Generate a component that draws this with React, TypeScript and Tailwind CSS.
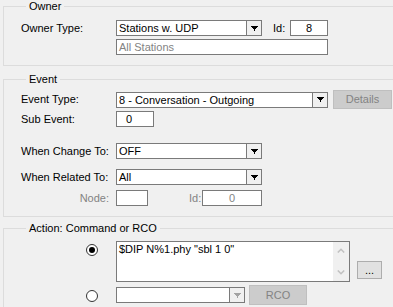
import type { ReactNode } from "react";

function Arrow({ disabled }: { disabled?: boolean }) {
  const fill = disabled ? "#a3a3a3" : "#000";
  return (
    <svg width="7" height="5" viewBox="0 0 7 5" shapeRendering="crispEdges">
      <rect x="0" y="0" width="7" height="1" fill={fill} />
      <rect x="1" y="1" width="5" height="1" fill={fill} />
      <rect x="2" y="2" width="3" height="1" fill={fill} />
      <rect x="3" y="3" width="1" height="2" fill={fill} />
    </svg>
  );
}

function Combo({ value, width, disabled }: { value?: string; width: string; disabled?: boolean }) {
  return (
    <div className={`flex h-[16px] ${width} border border-[#7a7a7a] bg-white`}>
      <span className="flex-1 truncate pl-[2px] leading-[14px]">{value}</span>
      <span className="flex w-[15px] items-center justify-center border-l border-[#7a7a7a] bg-[#f0f0f0]">
        <Arrow disabled={disabled} />
      </span>
    </div>
  );
}

function Box({ children, width, className = "" }: { children?: ReactNode; width: string; className?: string }) {
  return (
    <div className={`h-[16px] ${width} border border-[#7a7a7a] bg-white leading-[14px] ${className}`}>
      {children}
    </div>
  );
}

function Group({ title, className = "", children }: { title: string; className?: string; children: ReactNode }) {
  return (
    <fieldset className={`w-[400px] border border-[#dcdcdc] pl-[17px] ${className}`}>
      <legend className="ml-[5px] px-[3px] leading-[13px]">{title}</legend>
      {children}
    </fieldset>
  );
}

function Radio({ checked }: { checked?: boolean }) {
  return (
    <span className="flex h-[12px] w-[12px] items-center justify-center rounded-full border border-[#333] bg-white">
      {checked && <span className="h-[6px] w-[6px] rounded-full bg-black" />}
    </span>
  );
}

function Chevron({ up }: { up?: boolean }) {
  return (
    <svg width="8" height="5" viewBox="0 0 8 5">
      <path d={up ? "M0.8 4.5 L4 1.3 L7.2 4.5" : "M0.8 0.5 L4 3.7 L7.2 0.5"} fill="none" stroke="#c2c2c2" strokeWidth="1.6" />
    </svg>
  );
}

export default function App() {
  return (
    <div className="h-[307px] w-[393px] overflow-hidden bg-[#f0f0f0] pl-[3px] font-[family-name:Liberation_Sans,Arial,sans-serif] text-[11px] leading-[13px] text-black">
      <Group title="Owner" className="pt-[7px] pb-[10px]">
        <div className="flex h-[16px] items-center">
          <span className="w-[95px]">Owner Type:</span>
          <Combo value="Stations w. UDP" width="w-[146px]" />
          <span className="ml-[11px] w-[17px]">Id:</span>
          <Box width="w-[38px]" className="text-center">8</Box>
        </div>
        <div className="mt-[3px] flex">
          <span className="w-[95px]" />
          <Box width="w-[212px]" className="pl-[2px] text-[#838383]">All Stations</Box>
        </div>
      </Group>

      <Group title="Event" className="mt-[7px] pt-[4px] pb-[10px]">
        <div className="flex h-[19px] items-center">
          <span className="w-[95px]">Event Type:</span>
          <Combo value="8 - Conversation - Outgoing" width="w-[212px]" />
          <button className="ml-[5px] h-[19px] w-[59px] border border-[#bfbfbf] bg-[#cccccc] text-[#838383]">
            Details
          </button>
        </div>
        <div className="mt-[2px] flex items-center">
          <span className="w-[95px]">Sub Event:</span>
          <Box width="w-[38px]" className="pl-[9px]">0</Box>
        </div>
        <div className="mt-[16px] flex items-center">
          <span className="w-[95px]">When Change To:</span>
          <Combo value="OFF" width="w-[146px]" />
        </div>
        <div className="mt-[10px] flex items-center">
          <span className="w-[95px]">When Related To:</span>
          <Combo value="All" width="w-[146px]" />
        </div>
        <div className="mt-[5px] flex items-center text-[#838383]">
          <span className="w-[95px] pr-[7px] text-right">Node:</span>
          <Box width="w-[32px]" />
          <span className="ml-[41px] w-[13px]">Id:</span>
          <Box width="w-[60px]" className="text-center">0</Box>
        </div>
      </Group>

      <Group title="Action: Command or RCO" className="mt-[5px] pt-[6px] pb-[10px]">
        <div className="flex">
          <span className="flex w-[95px] justify-end pt-[3px] pr-[18px]">
            <Radio checked />
          </span>
          <div className="flex h-[41px] w-[234px] border border-[#7a7a7a] bg-white">
            <span className="flex-1 pt-[1px] pl-[2px]">{'$DIP N%1.phy "sbl 1 0"'}</span>
            <span className="flex w-[16px] flex-col justify-between bg-[#f0f0f0]">
              <span className="flex h-[17px] items-center justify-center">
                <Chevron up />
              </span>
              <span className="flex h-[17px] items-center justify-center">
                <Chevron />
              </span>
            </span>
          </div>
          <button className="mb-[3px] ml-[7px] h-[18px] w-[25px] self-end border border-[#adadad] bg-[#e1e1e1] leading-[12px]">
            ...
          </button>
        </div>
        <div className="mt-[3px] flex h-[20px] items-center">
          <span className="flex w-[95px] justify-end pr-[18px]">
            <span className="mt-[2px]">
              <Radio />
            </span>
          </span>
          <Combo width="w-[129px]" disabled />
          <button className="ml-[4px] h-[20px] w-[58px] border border-[#bfbfbf] bg-[#cccccc] text-[#838383]">
            RCO
          </button>
        </div>
      </Group>
    </div>
  );
}
